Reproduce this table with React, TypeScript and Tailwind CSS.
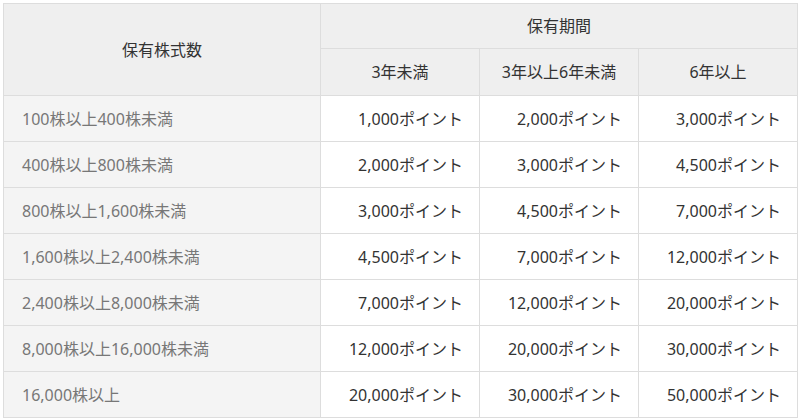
import React from 'react';

const rows: [string, string, string, string][] = [
  ['100株以上400株未満', '1,000ポイント', '2,000ポイント', '3,000ポイント'],
  ['400株以上800株未満', '2,000ポイント', '3,000ポイント', '4,500ポイント'],
  ['800株以上1,600株未満', '3,000ポイント', '4,500ポイント', '7,000ポイント'],
  ['1,600株以上2,400株未満', '4,500ポイント', '7,000ポイント', '12,000ポイント'],
  ['2,400株以上8,000株未満', '7,000ポイント', '12,000ポイント', '20,000ポイント'],
  ['8,000株以上16,000株未満', '12,000ポイント', '20,000ポイント', '30,000ポイント'],
  ['16,000株以上', '20,000ポイント', '30,000ポイント', '50,000ポイント'],
];

const App: React.FC = () => {
  return (
    <div
      className="w-[800px] h-[420px] bg-white p-[3px] text-[16px] text-[#333]"
      style={{ fontFamily: '"Noto Sans", "Noto Sans CJK JP", sans-serif' }}
    >
      <table className="w-[794px] border-collapse table-fixed">
        <colgroup>
          <col className="w-[317px]" />
          <col className="w-[159px]" />
          <col className="w-[159px]" />
          <col className="w-[159px]" />
        </colgroup>
        <thead>
          <tr className="h-[45px]">
            <th rowSpan={2} className="border border-[#ddd] bg-[#efefef] font-normal text-center">
              保有株式数
            </th>
            <th colSpan={3} className="border border-[#ddd] bg-[#efefef] font-normal text-center">
              保有期間
            </th>
          </tr>
          <tr className="h-[47px]">
            <th className="border border-[#ddd] bg-[#efefef] font-normal text-center">3年未満</th>
            <th className="border border-[#ddd] bg-[#efefef] font-normal text-center">3年以上6年未満</th>
            <th className="border border-[#ddd] bg-[#efefef] font-normal text-center">6年以上</th>
          </tr>
        </thead>
        <tbody>
          {rows.map((r) => (
            <tr key={r[0]} className="h-[46px]">
              <td className="border border-[#ddd] bg-[#f4f4f4] text-[#777] pl-[18px]">{r[0]}</td>
              <td className="border border-[#ddd] text-right pr-[16px]">{r[1]}</td>
              <td className="border border-[#ddd] text-right pr-[16px]">{r[2]}</td>
              <td className="border border-[#ddd] text-right pr-[16px]">{r[3]}</td>
            </tr>
          ))}
        </tbody>
      </table>
    </div>
  );
};

export default App;
